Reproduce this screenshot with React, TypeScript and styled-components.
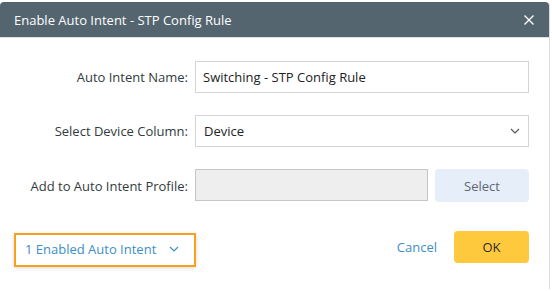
import React, { useState } from 'react';
import styled, { createGlobalStyle } from 'styled-components';

const GlobalStyle = createGlobalStyle`
  html, body {
    margin: 0;
    padding: 0;
    background: #ffffff;
  }
  body {
    font-family: 'Open Sans', 'Noto Sans', sans-serif;
  }
`;

const Dialog = styled.div`
  width: 550px;
  height: 287px;
  margin-top: 2px;
  box-sizing: border-box;
  border-right: 1px solid #d9dde0;
  border-radius: 4px 4px 0 0;
  background: #ffffff;
  display: flex;
  flex-direction: column;
`;

const Header = styled.div`
  height: 35px;
  background: #546570;
  border-radius: 4px 4px 0 0;
  border-bottom: 1px solid #dfe3e6;
  display: flex;
  align-items: center;
  justify-content: space-between;
  padding: 0 14px 0 14px;
  color: #ffffff;
  font-size: 13px;
`;

const Title = styled.span`
  letter-spacing: 0;
`;

const CloseButton = styled.button`
  border: none;
  background: transparent;
  padding: 0;
  width: 12px;
  height: 12px;
  display: flex;
  cursor: pointer;
`;

const Body = styled.div`
  padding: 23px 20px 0 0;
  display: grid;
  grid-template-columns: 188px 1fr;
  column-gap: 7px;
  row-gap: 22px;
  align-items: center;
`;

const Label = styled.label`
  text-align: right;
  font-size: 13px;
  color: #333a40;
`;

const TextInput = styled.input<{ $disabled?: boolean }>`
  box-sizing: border-box;
  height: 32px;
  width: 100%;
  min-width: 0;
  border: 1px solid ${p => (p.$disabled ? '#c6c6c6' : '#d4d4d4')};
  background: ${p => (p.$disabled ? '#eeeeee' : '#ffffff')};
  padding: 0 7px;
  font-family: inherit;
  font-size: 13px;
  color: #222;
  outline: none;
`;

const SelectBox = styled.div`
  box-sizing: border-box;
  height: 32px;
  border: 1px solid #d4d4d4;
  padding: 0 8px 0 8px;
  display: flex;
  align-items: center;
  justify-content: space-between;
  font-size: 13px;
  color: #222;
`;

const ProfileRow = styled.div`
  display: flex;
  gap: 7px;
  height: 33px;
`;

const SecondaryButton = styled.button`
  flex: 0 0 94px;
  border: none;
  border-radius: 4px;
  background: #e6eefa;
  color: #5f6770;
  font-family: inherit;
  font-size: 13px;
`;

const Footer = styled.div`
  margin-top: 29px;
  padding: 0 20px 0 14px;
  display: flex;
  align-items: flex-start;
  justify-content: space-between;
`;

const EnabledLink = styled.button`
  box-sizing: border-box;
  width: 182px;
  height: 34px;
  margin-top: 2px;
  border: 2px solid #f9a11b;
  box-shadow: 0 1px 4px rgba(0, 0, 0, 0.15);
  background: #ffffff;
  padding: 0 0 3px 9px;
  display: flex;
  align-items: center;
  gap: 13px;
  color: #3b8ec8;
  font-family: inherit;
  font-size: 13px;
  cursor: pointer;
`;

const Actions = styled.div`
  display: flex;
  align-items: center;
  gap: 17px;
`;

const LinkButton = styled.button`
  border: none;
  background: transparent;
  padding: 0;
  color: #3b8ec8;
  font-family: inherit;
  font-size: 13px;
`;

const PrimaryButton = styled.button`
  width: 75px;
  height: 32px;
  border: none;
  border-radius: 4px;
  background: #ffc93d;
  color: #2a2a2a;
  font-family: inherit;
  font-size: 13px;
`;

const Chevron = ({ color }: { color: string }) => (
  <svg width="10" height="6" viewBox="0 0 10 6">
    <path d="M1 1 L5 5 L9 1" fill="none" stroke={color} strokeWidth="1.2" />
  </svg>
);

export default function App() {
  const [name, setName] = useState('Switching - STP Config Rule');

  return (
    <>
      <GlobalStyle />
      <Dialog>
        <Header>
          <Title>Enable Auto Intent - STP Config Rule</Title>
          <CloseButton>
            <svg width="12" height="12" viewBox="0 0 12 12">
              <path d="M1.5 1.5 L10.5 10.5 M10.5 1.5 L1.5 10.5" stroke="#ffffff" strokeWidth="1.4" />
            </svg>
          </CloseButton>
        </Header>
        <Body>
          <Label htmlFor="name">Auto Intent Name:</Label>
          <TextInput id="name" value={name} onChange={e => setName(e.target.value)} />
          <Label>Select Device Column:</Label>
          <SelectBox>
            <span>Device</span>
            <Chevron color="#555" />
          </SelectBox>
          <Label>Add to Auto Intent Profile:</Label>
          <ProfileRow>
            <TextInput $disabled disabled />
            <SecondaryButton>Select</SecondaryButton>
          </ProfileRow>
        </Body>
        <Footer>
          <EnabledLink>
            <span>1 Enabled Auto Intent</span>
            <Chevron color="#3b8ec8" />
          </EnabledLink>
          <Actions>
            <LinkButton>Cancel</LinkButton>
            <PrimaryButton>OK</PrimaryButton>
          </Actions>
        </Footer>
      </Dialog>
    </>
  );
}
